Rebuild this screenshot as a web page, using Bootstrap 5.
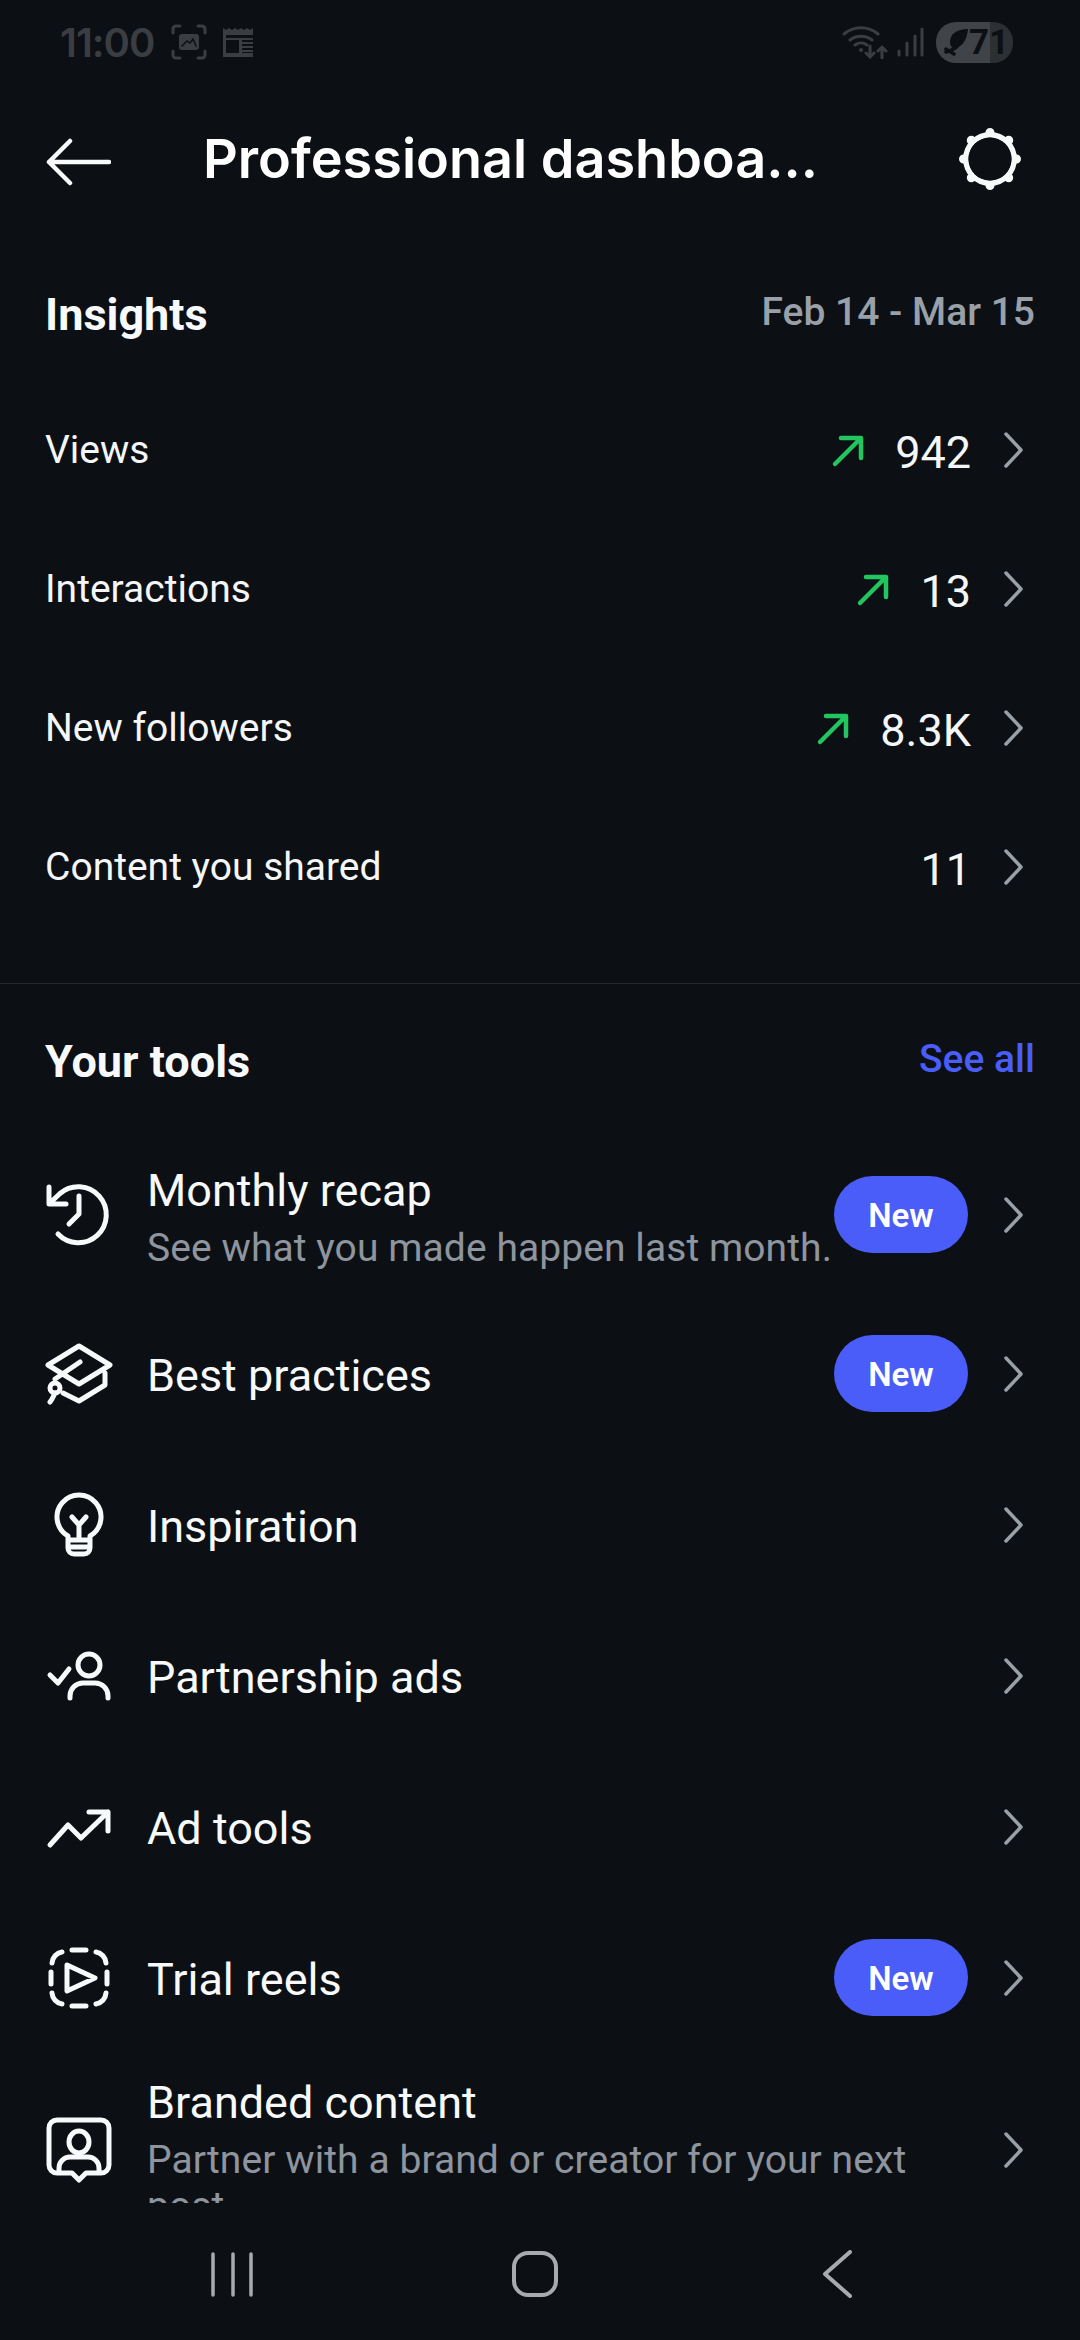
<!DOCTYPE html>
<html lang="en">
<head>
<meta charset="utf-8">
<title>Professional dashboard</title>
<link rel="stylesheet" href="https://cdn.jsdelivr.net/npm/bootstrap@5.3.0/dist/css/bootstrap.min.css">
<style>
html,body{height:2340px;width:1080px;overflow:hidden}
body{background:#0c1014;color:#f5f6f7;font-family:Roboto,"Liberation Sans",sans-serif}
.app{height:2340px}
.status{height:80px;padding:4px 67px 0 60px;color:#3a3d41}
.clock{font:600 40px Inter,sans-serif;letter-spacing:-1px;margin-right:17px}
.stat-ico{display:block}
.batt{width:77px;height:41px;border-radius:20px;background:linear-gradient(90deg,#404347 70%,#2d3033 70%);color:#0c1014;font:700 35px/41px Roboto,sans-serif;margin-left:12px;padding-left:8px}
.topbar{height:158px;padding:0 57px 0 45px}
.title{font:600 54px/60px Inter,sans-serif;color:#fff;margin:0 0 0 92px;white-space:nowrap}
.back{margin-top:6px}
.scroller{height:1965px;overflow:hidden}
.sec-head{height:142px;padding:12px 45px 0}
.tool-head{height:147px;padding:8px 45px 0}
.sec-title{font:700 45px/50px Roboto,sans-serif;color:#f8f9fa;margin:0}
.date{font:500 39px/44px Roboto,sans-serif;color:#9aa0a8;margin-top:-6px}
.see{font:500 39px/44px Roboto,sans-serif;color:#4a5df9;margin-top:-6px;text-decoration:none}
.rows{--bs-list-group-bg:transparent;--bs-list-group-border-width:0;--bs-list-group-color:#f5f6f7}
.stat-row{height:139px;padding:0 57px 0 45px!important;font-size:39px;line-height:44px}
.stat-row .num{font-size:45px;line-height:50px;margin-top:7px;margin-left:30px}
.chev{flex:none;margin-left:34px;width:19px;height:36px}
.stat-row .chev{margin-left:33px}
.tool .chev{margin-left:36px}
.rule{height:1px;margin:47px 0 0;background:#24282c;opacity:1;border:0}
.tool{height:151px;padding:0 57px 0 45px!important}
.tool.tall{height:167px}
.tool.long{height:194px}
.tool-ico{flex:none;width:68px;height:66px;margin-right:34px}
.tool-name{font-size:45px;line-height:56px;color:#f8f9fa}
.tool-sub{font-size:39px;line-height:46px;color:#8e959e;margin-top:6px;letter-spacing:.08px}
.tool-body{min-width:0;flex:1 1 auto;padding-top:4px}
.pill{flex:none;width:134px;height:77px;border-radius:39px;background:#4a5df9;color:#fff;font:600 33px/79px Roboto,sans-serif;text-align:center}
.sysnav{height:137px;gap:242px;padding:5px 10px 0 0}
.sysnav svg{width:60px;height:48px;display:block}
svg.ln{fill:none;stroke:#f8f9fa;stroke-width:5;stroke-linecap:round;stroke-linejoin:round}
</style>
</head>
<body>
<div class="app d-flex flex-column">
  <div class="status d-flex align-items-center">
    <span class="clock">11:00</span>
    <svg class="stat-ico me-3" width="36" height="36" viewBox="0 0 36 36" fill="none" stroke="#3a3d41" stroke-width="3" stroke-linecap="round"><path d="M2 9V5a3 3 0 0 1 3-3h4M27 2h4a3 3 0 0 1 3 3v4M2 27v4a3 3 0 0 0 3 3h4M27 34h4a3 3 0 0 0 3-3v-4"/><rect x="8" y="10" width="20" height="16" rx="3" fill="#3a3d41" stroke="none"/><path d="M11 22l5-5 3 2 3-4 3 7" stroke="#0c1014" stroke-width="1.5"/></svg>
    <svg class="stat-ico" width="33" height="30" viewBox="0 0 33 30"><path d="M0 4V1l3 2 3-2 3 2 3-2 3 2 3-2 3 2 3-2 3 2 3-2v29a2 2 0 0 1-2 2H2a2 2 0 0 1-2-2z" fill="#3a3d41"/><path d="M3 8h27v3H3zM3 13h13v13H3zM19 13h11v2H19zM19 17h11v2H19zM19 21h11v2H19zM19 25h11v1H19z" fill="#0c1014"/></svg>
    <div class="ms-auto d-flex align-items-center">
      <svg class="stat-ico" width="46" height="34" viewBox="0 0 46 34" fill="none" stroke="#3a3d41" stroke-width="3" stroke-linecap="round"><path d="M2 9a26 26 0 0 1 34 0M8 15a18 18 0 0 1 22 0M13 20a10 10 0 0 1 12 0"/><circle cx="19" cy="25" r="2" fill="#3a3d41" stroke="none"/><path d="M28 21v11M24 28l4 4 4-4M40 33V22M36 26l4-4 4 4"/></svg>
      <svg class="stat-ico ms-2" width="28" height="30" viewBox="0 0 28 30" fill="none" stroke="#3a3d41" stroke-width="3" stroke-linecap="round"><path d="M3 28v-4M11 28V16M19 28V9M26 28V2"/></svg>
      <div class="batt d-flex align-items-center">
        <svg width="25" height="28" viewBox="0 0 25 28" class="stat-ico" fill="none" stroke="#0c1014" stroke-linecap="round"><path d="M24 1C13 1 6 6 6 14c0 3 1 5 3 6 9 0 14-8 15-19z" fill="#0c1014" stroke="none"/><path d="M2 24c4-1 12-3 14-11M2 21l8 5" stroke-width="3.500"/></svg><span>71</span>
      </div>
    </div>
  </div>

  <header class="topbar d-flex align-items-center">
    <svg class="back" width="66" height="48" viewBox="0 0 66 48" fill="none" stroke="#f8f9fa" stroke-width="4.500" stroke-linecap="round" stroke-linejoin="round"><path d="M25 3L4 24l21 21M4 24h60"/></svg>
    <h1 class="title">Professional dashboa...</h1>
    <svg class="ms-auto" width="66" height="66" viewBox="0 0 66 66" fill="#f8f9fa"><path fill-rule="evenodd" d="M33 6a27 27 0 1 0 0 54 27 27 0 0 0 0-54zm0 5.500a21.500 21.500 0 1 1 0 43 21.500 21.500 0 0 1 0-43z"/><path fill="none" stroke="#f8f9fa" stroke-width="9" stroke-linecap="round" d="M33 6.500v.1M51.700 14.300v.1M59.500 33v.1M51.700 51.700v.1M33 59.500v.1M14.300 51.700v.1M6.500 33v.1M14.300 14.300v.1"/><circle cx="33" cy="33" r="21.500" fill="#0c1014"/></svg>
  </header>

  <main class="scroller">
    <div class="sec-head d-flex align-items-center justify-content-between">
      <h2 class="sec-title">Insights</h2>
      <span class="date">Feb 14 - Mar 15</span>
    </div>
    <ul class="list-group list-group-flush rows">
      <li class="list-group-item stat-row d-flex align-items-center">
        <span class="me-auto">Views</span>
        <svg class="up" width="36" height="36" viewBox="0 0 36 36" fill="none" stroke="#22c55e" stroke-width="4.500" stroke-linecap="round" stroke-linejoin="round"><path d="M6 32L31 7M12 6h20v20"/></svg>
        <span class="num">942</span>
        <svg class="chev" viewBox="0 0 19 36" fill="none" stroke="#9aa0a8" stroke-width="3.500" stroke-linecap="round" stroke-linejoin="round"><path d="M2 2l15 16L2 34"/></svg>
      </li>
      <li class="list-group-item stat-row d-flex align-items-center">
        <span class="me-auto">Interactions</span>
        <svg class="up" width="36" height="36" viewBox="0 0 36 36" fill="none" stroke="#22c55e" stroke-width="4.500" stroke-linecap="round" stroke-linejoin="round"><path d="M6 32L31 7M12 6h20v20"/></svg>
        <span class="num">13</span>
        <svg class="chev" viewBox="0 0 19 36" fill="none" stroke="#9aa0a8" stroke-width="3.500" stroke-linecap="round" stroke-linejoin="round"><path d="M2 2l15 16L2 34"/></svg>
      </li>
      <li class="list-group-item stat-row d-flex align-items-center">
        <span class="me-auto">New followers</span>
        <svg class="up" width="36" height="36" viewBox="0 0 36 36" fill="none" stroke="#22c55e" stroke-width="4.500" stroke-linecap="round" stroke-linejoin="round"><path d="M6 32L31 7M12 6h20v20"/></svg>
        <span class="num">8.3K</span>
        <svg class="chev" viewBox="0 0 19 36" fill="none" stroke="#9aa0a8" stroke-width="3.500" stroke-linecap="round" stroke-linejoin="round"><path d="M2 2l15 16L2 34"/></svg>
      </li>
      <li class="list-group-item stat-row d-flex align-items-center">
        <span class="me-auto">Content you shared</span>
        <span class="num">11</span>
        <svg class="chev" viewBox="0 0 19 36" fill="none" stroke="#9aa0a8" stroke-width="3.500" stroke-linecap="round" stroke-linejoin="round"><path d="M2 2l15 16L2 34"/></svg>
      </li>
    </ul>
    <hr class="rule">
    <div class="tool-head d-flex align-items-center justify-content-between">
      <h2 class="sec-title">Your tools</h2>
      <a class="see" href="#">See all</a>
    </div>
    <ul class="list-group list-group-flush rows">
      <li class="list-group-item tool tall d-flex align-items-center">
        <svg class="tool-ico ln" viewBox="0 0 68 66"><path d="M4 5V22H21M5 21L15 11.500A28 28 0 1 1 13 52M34 14V32L24 42"/></svg>
        <div class="tool-body"><div class="tool-name">Monthly recap</div><div class="tool-sub text-nowrap">See what you made happen last month.</div></div>
        <span class="pill">New</span>
        <svg class="chev" viewBox="0 0 19 36" fill="none" stroke="#9aa0a8" stroke-width="3.500" stroke-linecap="round" stroke-linejoin="round"><path d="M2 2l15 16L2 34"/></svg>
      </li>
      <li class="list-group-item tool d-flex align-items-center">
        <svg class="tool-ico ln" viewBox="0 0 68 66"><path d="M34 5L65 24 34 43 3 24ZM35 21L10 38M60 32V44L34 60 18 52M10 52C8 56 7 59 5 61"/><circle cx="10" cy="47" r="5"/></svg>
        <div class="tool-body"><div class="tool-name">Best practices</div></div>
        <span class="pill">New</span>
        <svg class="chev" viewBox="0 0 19 36" fill="none" stroke="#9aa0a8" stroke-width="3.500" stroke-linecap="round" stroke-linejoin="round"><path d="M2 2l15 16L2 34"/></svg>
      </li>
      <li class="list-group-item tool d-flex align-items-center">
        <svg class="tool-ico ln" viewBox="0 0 68 66"><path d="M23 48V44A22 22 0 1 1 45 44V48ZM23 48H45V56A6 6 0 0 1 39 62H29A6 6 0 0 1 23 56ZM24 55H44M27 25L34 33 41 25M34 33V47"/></svg>
        <div class="tool-body"><div class="tool-name">Inspiration</div></div>
        <svg class="chev" viewBox="0 0 19 36" fill="none" stroke="#9aa0a8" stroke-width="3.500" stroke-linecap="round" stroke-linejoin="round"><path d="M2 2l15 16L2 34"/></svg>
      </li>
      <li class="list-group-item tool d-flex align-items-center">
        <svg class="tool-ico ln" viewBox="0 0 68 66"><circle cx="44" cy="22" r="11"/><path d="M25 55V53A13 13 0 0 1 38 40H50A13 13 0 0 1 63 53V55M5 32L13 40 24 26"/></svg>
        <div class="tool-body"><div class="tool-name">Partnership ads</div></div>
        <svg class="chev" viewBox="0 0 19 36" fill="none" stroke="#9aa0a8" stroke-width="3.500" stroke-linecap="round" stroke-linejoin="round"><path d="M2 2l15 16L2 34"/></svg>
      </li>
      <li class="list-group-item tool d-flex align-items-center">
        <svg class="tool-ico ln" viewBox="0 0 68 66"><path d="M5 51L23 31 36 44 63 18M44 18H63V37"/></svg>
        <div class="tool-body"><div class="tool-name">Ad tools</div></div>
        <svg class="chev" viewBox="0 0 19 36" fill="none" stroke="#9aa0a8" stroke-width="3.500" stroke-linecap="round" stroke-linejoin="round"><path d="M2 2l15 16L2 34"/></svg>
      </li>
      <li class="list-group-item tool d-flex align-items-center">
        <svg class="tool-ico ln" viewBox="0 0 68 66"><path d="M6 27V39M62 27V39M27 5H41M27 61H41M7 18A12 12 0 0 1 17 7M51 7A12 12 0 0 1 61 18M7 48A12 12 0 0 0 17 59M51 59A12 12 0 0 0 61 48M22 20L50 33 22 46Z"/></svg>
        <div class="tool-body"><div class="tool-name">Trial reels</div></div>
        <span class="pill">New</span>
        <svg class="chev" viewBox="0 0 19 36" fill="none" stroke="#9aa0a8" stroke-width="3.500" stroke-linecap="round" stroke-linejoin="round"><path d="M2 2l15 16L2 34"/></svg>
      </li>
      <li class="list-group-item tool long d-flex align-items-center">
        <svg class="tool-ico ln" viewBox="0 0 68 66"><path d="M27 56H12A8 8 0 0 1 4 48V11A8 8 0 0 1 12 3H56A8 8 0 0 1 64 11V48A8 8 0 0 1 56 56H41L34 63ZM14 55V51A11 11 0 0 1 25 40H43A11 11 0 0 1 54 51V55"/><ellipse cx="34" cy="25" rx="10" ry="11"/></svg>
        <div class="tool-body"><div class="tool-name">Branded content</div><div class="tool-sub">Partner with a brand or creator for your next post</div></div>
        <svg class="chev" viewBox="0 0 19 36" fill="none" stroke="#9aa0a8" stroke-width="3.500" stroke-linecap="round" stroke-linejoin="round"><path d="M2 2l15 16L2 34"/></svg>
      </li>
    </ul>
  </main>

  <nav class="sysnav d-flex align-items-center justify-content-center">
    <svg viewBox="0 0 60 48" fill="none" stroke="#a8abae" stroke-width="3.500" stroke-linecap="round"><path d="M10 4V45M30 4V45M48 4V45"/></svg>
    <svg viewBox="0 0 60 48" fill="none" stroke="#a8abae" stroke-width="4"><rect x="9" y="3" width="42" height="42" rx="14"/></svg>
    <svg viewBox="0 0 60 48" fill="none" stroke="#a8abae" stroke-width="4" stroke-linecap="round" stroke-linejoin="round"><path d="M43 2L18 24 43 46"/></svg>
  </nav>
</div>
<script src="https://cdn.jsdelivr.net/npm/bootstrap@5.3.0/dist/js/bootstrap.bundle.min.js"></script>
</body>
</html>
